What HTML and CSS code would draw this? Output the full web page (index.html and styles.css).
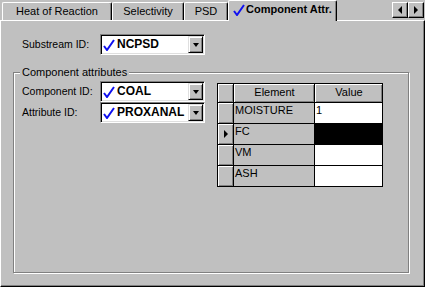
FILE: index.html
```html
<!doctype html>
<html>
<head>
<title>Component Attr.</title>
    <link rel="stylesheet" href="styles.css">
</head>
<body>
<div class="window">
    <div class="tabstrip">
        <div class="tab tab-heat">Heat of Reaction</div>
        <div class="tab tab-sel">Selectivity</div>
        <div class="tab tab-psd">PSD</div>
        <div class="tab tab-active">
            <svg class="check" width="12" height="12" viewBox="0 0 12 12"><path d="M1 7 L4 11 L11 1" fill="none" stroke="#1010f0" stroke-width="2"/></svg>Component Attr.
        </div>
        <div class="tab-fill"></div>
        <div class="scroll-btns">
            <div class="scroll-btn"><i class="arrow-left"></i></div>
            <div class="scroll-btn"><i class="arrow-right"></i></div>
        </div>
    </div>
    <div class="panel">
        <div class="field-row substream-row">
            <label class="field-label">Substream ID:</label>
            <div class="combo">
                <div class="combo-value"><svg class="check" width="12" height="12" viewBox="0 0 12 12"><path d="M1 7 L4 11 L11 1" fill="none" stroke="#1010f0" stroke-width="2"/></svg>NCPSD</div>
                <div class="combo-btn"><i class="arrow-down"></i></div>
            </div>
        </div>
        <div class="group">
            <span class="group-title">Component attributes</span>
            <div class="group-body">
                <div class="fields">
                    <div class="field-row">
                        <label class="field-label">Component ID:</label>
                        <div class="combo">
                            <div class="combo-value"><svg class="check" width="12" height="12" viewBox="0 0 12 12"><path d="M1 7 L4 11 L11 1" fill="none" stroke="#1010f0" stroke-width="2"/></svg>COAL</div>
                            <div class="combo-btn"><i class="arrow-down"></i></div>
                        </div>
                    </div>
                    <div class="field-row">
                        <label class="field-label">Attribute ID:</label>
                        <div class="combo">
                            <div class="combo-value"><svg class="check" width="12" height="12" viewBox="0 0 12 12"><path d="M1 7 L4 11 L11 1" fill="none" stroke="#1010f0" stroke-width="2"/></svg>PROXANAL</div>
                            <div class="combo-btn"><i class="arrow-down"></i></div>
                        </div>
                    </div>
                </div>
                <div class="grid">
                    <div class="cell cell-ind cell-head"></div>
                    <div class="cell cell-head">Element</div>
                    <div class="cell cell-head">Value</div>

                    <div class="cell cell-ind"></div>
                    <div class="cell cell-name">MOISTURE</div>
                    <div class="cell cell-val">1</div>

                    <div class="cell cell-ind"><i class="arrow-current"></i></div>
                    <div class="cell cell-name">FC</div>
                    <div class="cell cell-val cell-sel"></div>

                    <div class="cell cell-ind"></div>
                    <div class="cell cell-name">VM</div>
                    <div class="cell cell-val"></div>

                    <div class="cell cell-ind"></div>
                    <div class="cell cell-name">ASH</div>
                    <div class="cell cell-val"></div>
                </div>
            </div>
        </div>
    </div>
</div>
</body>
</html>
```

FILE: styles.css
```css
html,body{margin:0;padding:0;}
body{background:#c0c0c0;color:#000;font:11px/13px "Liberation Sans",Arial,sans-serif;}
.window{width:425px;height:287px;display:flex;flex-direction:column;}

/* tabs */
.tabstrip{display:flex;align-items:flex-end;height:20px;padding-left:2px;}
.tab{box-sizing:border-box;height:18px;line-height:16px;text-align:center;
    border-top:1px solid #fff;border-left:1px solid #fff;border-right:1px solid #000;
    border-top-left-radius:2px;border-top-right-radius:2px;
    box-shadow:inset -1px 0 #808080;}
.tab-heat{width:110px;}
.tab-sel{width:72px;}
.tab-psd{width:44px;}
.tab-active{width:109px;height:21px;margin-bottom:-1px;position:relative;z-index:1;background:#c0c0c0;
    font-weight:bold;line-height:17px;display:flex;align-items:center;padding:0 0 3px 4px;text-align:left;}
.tab-active .check{margin-right:1px;}
.tab-fill{flex:1;}
.scroll-btns{display:flex;align-self:flex-start;margin:2px 1px 0 0;}
.scroll-btn{box-sizing:border-box;width:16px;height:16px;display:flex;align-items:center;justify-content:center;
    border-top:1px solid #fff;border-left:1px solid #fff;border-right:1px solid #000;border-bottom:1px solid #000;
    box-shadow:inset -1px -1px #808080;}
.arrow-left{width:0;height:0;border-top:4px solid transparent;border-bottom:4px solid transparent;border-right:4px solid #000;}
.arrow-right{width:0;height:0;border-top:4px solid transparent;border-bottom:4px solid transparent;border-left:4px solid #000;}

/* panel */
.panel{flex:1;display:flex;flex-direction:column;
    border-top:1px solid #fff;border-left:1px solid #fff;border-right:1px solid #000;border-bottom:1px solid #000;
    box-shadow:inset -1px -1px #808080;}
.field-row{display:flex;align-items:center;height:21px;}
.substream-row{margin:13px 0 0 21px;}
.field-label{width:78px;font-size:10.5px;}
.combo{box-sizing:border-box;width:105px;height:21px;display:flex;background:#fff;
    border:1px solid;border-color:#808080 #fff #fff #808080;box-shadow:inset 1px 1px #000,inset -1px -1px #dfdfdf;}
.combo-value{flex:1;display:flex;align-items:center;font-weight:bold;font-size:12px;padding-left:2px;}
.check{margin-right:2px;flex:none;}
.combo-btn{box-sizing:border-box;width:15px;margin:1px 1px 1px 0;display:flex;align-items:center;justify-content:center;background:#c0c0c0;
    border-top:1px solid #dfdfdf;border-left:1px solid #dfdfdf;border-right:1px solid #000;border-bottom:1px solid #000;
    box-shadow:inset 1px 1px #fff,inset -1px -1px #808080;}
.arrow-down{width:0;height:0;border-left:3.5px solid transparent;border-right:3.5px solid transparent;border-top:4px solid #000;}

/* group box */
.group{flex:1;position:relative;margin:17px 15px 13px 12px;
    border:1px solid #808080;box-shadow:1px 1px #fff,inset 1px 1px #fff;}
.group-title{position:absolute;top:-7px;left:6px;padding:0 2px;background:#c0c0c0;}
.group-body{display:flex;padding:8px 0 0 8px;}
.fields{display:flex;flex-direction:column;}

/* grid */
.grid{display:grid;grid-template-columns:16px 81px 68px;grid-template-rows:19px repeat(4,21px);
    margin:2px 0 0 12px;border-top:1px solid #000;border-left:1px solid #000;align-self:flex-start;}
.cell{box-sizing:border-box;border-right:1px solid #000;border-bottom:1px solid #000;padding:1px 0 0 1px;white-space:nowrap;}
.cell-ind{background:#c0c0c0;box-shadow:inset 1px 1px #fff,inset -1px -1px #808080;display:flex;align-items:center;justify-content:center;padding:0;}
.cell-head{background:#c0c0c0;box-shadow:inset 1px 1px #fff,inset -1px -1px #808080;text-align:center;padding-top:2px;}
.cell-name{background:#c0c0c0;}
.cell-val{background:#fff;}
.cell-sel{background:#000;}
.arrow-current{width:0;height:0;border-top:4px solid transparent;border-bottom:4px solid transparent;border-left:4px solid #000;}
```
